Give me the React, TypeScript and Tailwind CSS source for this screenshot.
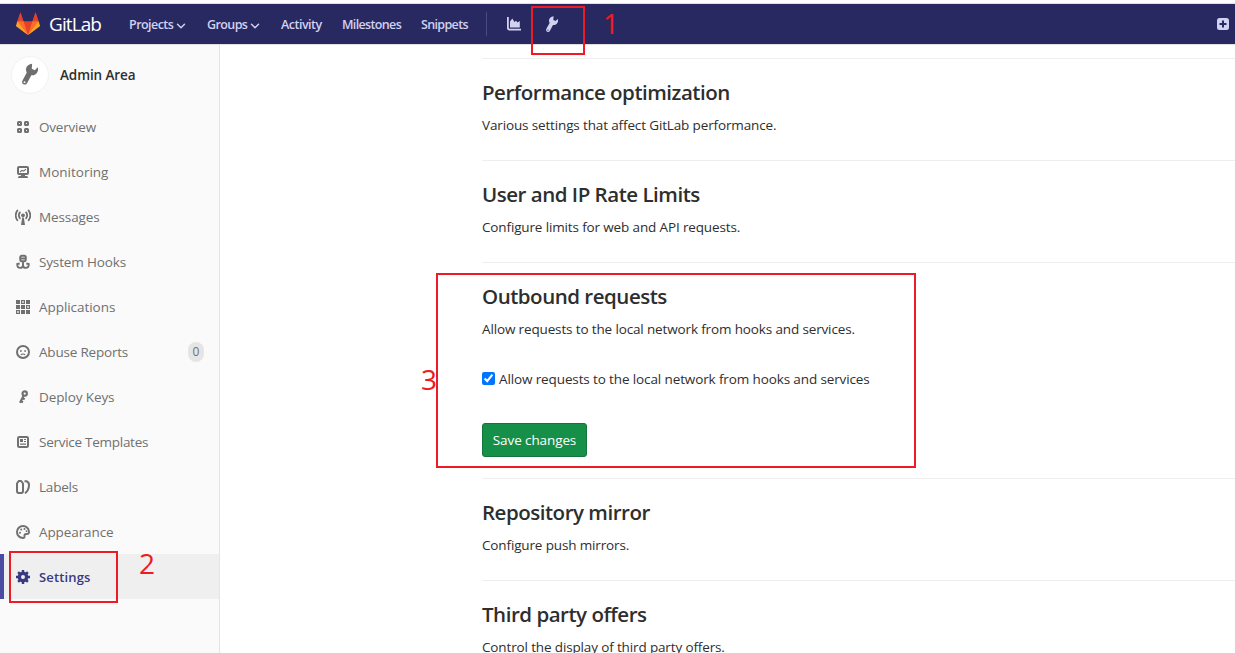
import type { ReactNode } from "react";

const Icon = ({ children }: { children: ReactNode }) => (
  <svg viewBox="0 0 16 16" className="size-4 shrink-0" fill="currentColor">
    {children}
  </svg>
);

const Logo = () => (
  <svg viewBox="0 0 36 36" className="size-6 shrink-0">
    <path fill="#e24329" d="M2 14l9.38 9v-9l-4-12.28c-.205-.632-1.176-.632-1.38 0z" />
    <path fill="#e24329" d="M34 14l-9.38 9v-9l4-12.28c.205-.632 1.176-.632 1.38 0z" />
    <path fill="#e24329" d="M18 34.38L3 14h30z" />
    <path fill="#fc6d26" d="M18 34.38L11.38 14H2l4 11z" />
    <path fill="#fc6d26" d="M18 34.38L24.62 14H34l-4 11z" />
    <path fill="#fca326" d="M2 14L.1 20.16c-.18.565 0 1.2.5 1.56l17.42 12.66z" />
    <path fill="#fca326" d="M34 14l1.9 6.16c.18.565 0 1.2-.5 1.56L18 34.38z" />
  </svg>
);

const Wrench = ({ className }: { className: string }) => (
  <svg viewBox="0 0 12 16" className={className} fill="currentColor">
    <path
      fillRule="evenodd"
      d="M7.6.3C4.8.6 3 2.4 3 4.6c0 .9.2 1.6.6 2.3L.4 12.8c-.6 1.1-.3 2.3.7 2.9 1 .5 2.1.2 2.7-.8L7 9c2.2.2 4.2-1 4.8-3.1.3-1 .3-2 0-2.9L9.6 5.1 7.3 4zM1.9 13.4a.7.7 0 1 1 0 1.4.7.7 0 0 1 0-1.4z"
    />
  </svg>
);

const Chevron = () => (
  <svg viewBox="0 0 10 6" className="mt-0.5 h-1.5 w-2.5" fill="none" stroke="currentColor" strokeWidth="1.5">
    <path d="M1.5 1.3L5 4.7l3.5-3.4" strokeLinecap="round" strokeLinejoin="round" />
  </svg>
);

const items = [
  {
    label: "Overview",
    tracking: "tracking-[-0.2px]",
    icon: (
      <g fill="none" stroke="currentColor" strokeWidth="2">
        <rect x="3" y="3" width="3" height="3" rx=".6" />
        <rect x="10" y="3" width="3" height="3" rx=".6" />
        <rect x="3" y="10" width="3" height="3" rx=".6" />
        <rect x="10" y="10" width="3" height="3" rx=".6" />
      </g>
    ),
  },
  {
    label: "Monitoring",
    tracking: "tracking-[0px]",
    icon: (
      <>
        <rect x="3" y="3" width="10" height="7" rx="1" fill="none" stroke="currentColor" strokeWidth="2" />
        <path d="M6 11h4v1.5H6zM4.5 12h7c.9 0 1.5.8 1.5 2H3c0-1.2.6-2 1.5-2z" />
        <path d="M5 8l2-1.7 1.4.8L11 5.2" fill="none" stroke="currentColor" strokeWidth="1.1" />
      </>
    ),
  },
  {
    label: "Messages",
    tracking: "tracking-[-0.1px]",
    icon: (
      <>
        <circle cx="8" cy="6.3" r="1.9" />
        <path d="M7.2 8.5h1.6L10 16H6z" />
        <path
          d="M2.4 1.5C.3 4.5.3 8.3 2.4 11.3M13.6 1.5c2.1 3 2.1 6.8 0 9.8M4.9 3.4c-1.3 1.8-1.3 4 0 5.8M11.1 3.4c1.3 1.8 1.3 4 0 5.8"
          fill="none"
          stroke="currentColor"
          strokeWidth="1.8"
          strokeLinecap="round"
        />
      </>
    ),
  },
  {
    label: "System Hooks",
    tracking: "tracking-[-0.15px]",
    icon: (
      <g fill="none" stroke="currentColor" strokeWidth="1.9" strokeLinejoin="round">
        <rect x="5.2" y="1.8" width="5.6" height="5.4" rx="1.6" />
        <path d="M5 4.5h6M8 7v7" />
        <path d="M4.7 9.5L2.2 10c0 2.4.9 3.9 2.9 3.9 1.6 0 2.6-.6 2.9-2.2.3 1.6 1.3 2.2 2.9 2.2 2 0 2.9-1.5 2.9-3.9l-2.5-.5" />
      </g>
    ),
  },
  {
    label: "Applications",
    tracking: "tracking-[-0.05px]",
    icon: (
      <>
        <path d="M1 1h4v4H1zM11 1h4v4h-4zM1 6h4v4H1zM6 6h4v4H6zM6 11h4v4H6zM11 11h4v4h-4z" />
        <g fill="none" stroke="currentColor" strokeWidth="1.2">
          <rect x="6.6" y="1.6" width="2.8" height="2.8" />
          <rect x="11.6" y="6.6" width="2.8" height="2.8" />
          <rect x="1.6" y="11.6" width="2.8" height="2.8" />
        </g>
      </>
    ),
  },
  {
    label: "Abuse Reports",
    tracking: "tracking-[-0.2px]",
    count: 0,
    icon: (
      <>
        <circle cx="8" cy="8" r="6" fill="none" stroke="currentColor" strokeWidth="2" />
        <circle cx="5.9" cy="7" r=".9" />
        <circle cx="10.1" cy="7" r=".9" />
        <path d="M5.9 11c.8-1.4 3.4-1.4 4.2 0" fill="none" stroke="currentColor" strokeWidth="1.1" />
      </>
    ),
  },
  {
    label: "Deploy Keys",
    tracking: "tracking-[-0.1px]",
    icon: (
      <g fill="none" stroke="currentColor" strokeWidth="2.1">
        <circle cx="9.7" cy="4.6" r="2.2" />
        <path d="M8.7 6.5L5 13.8M7.5 9.3l2.2 1M5.8 12.3l2.2 1" />
      </g>
    ),
  },
  {
    label: "Service Templates",
    tracking: "tracking-[-0.27px]",
    icon: (
      <>
        <rect x="3" y="3" width="10" height="10" rx="1.3" fill="none" stroke="currentColor" strokeWidth="2" />
        <path d="M5 5h3v3H5zM9 5h2v1H9zM9 7h2v1H9zM5 9.5h6v1.3H5z" />
      </>
    ),
  },
  {
    label: "Labels",
    tracking: "tracking-[-0.2px]",
    icon: (
      <g fill="none" stroke="currentColor" strokeWidth="2" strokeLinejoin="round">
        <path d="M2 4.5L3.7 2h2.5L8 4.5V12c0 1.300-.6 2-1.800 2H3.700C2.600 14 2 13.300 2 12z" />
        <path d="M9.500 2.300h2C13.200 2.900 14 4.300 14 6.100c0 2.900-1.500 7.300-4.200 7.900" />
      </g>
    ),
  },
  {
    label: "Appearance",
    tracking: "tracking-[-0.1px]",
    icon: (
      <>
        <path
          d="M14 8a6 6 0 1 0-6 6c1 0 1.7-.5 1.5-1.5-.3-1.8.5-2.7 2.2-2.6 1.5.1 2.3-.6 2.3-1.9z"
          fill="none"
          stroke="currentColor"
          strokeWidth="2"
        />
        <circle cx="5" cy="8.7" r="1" />
        <circle cx="6.2" cy="5.6" r="1" />
        <circle cx="9.5" cy="5" r="1" />
        <circle cx="11.5" cy="7.2" r=".9" />
      </>
    ),
  },
  {
    label: "Settings",
    tracking: "tracking-[0.15px]",
    active: true,
    icon: (
      <g fill="none" stroke="currentColor">
        <circle cx="8" cy="8" r="3.7" strokeWidth="3.4" />
        <path d="M8 1v3M8 12v3M1 8h3M12 8h3M3.100 3.100l2.100 2.100M10.800 10.800l2.100 2.100M12.900 3.100l-2.100 2.100M5.200 10.800l-2.100 2.100" strokeWidth="2.4" />
      </g>
    ),
  },
];

const Section = ({ title, text, children }: { title: string; text: string; children?: ReactNode }) => (
  <section className="border-t border-[#eee] pt-[18px] pb-[25px]">
    <h4 className="h-[30px] text-[20.5px] leading-[30px] font-semibold tracking-[-0.48px] text-[#2e2e2e]">{title}</h4>
    <p className="mt-2 h-5 text-[13.5px] leading-5 tracking-[-0.14px]">{text}</p>
    {children}
  </section>
);

export default function App() {
  return (
    <div className="relative flex h-[653px] w-[1235px] flex-col overflow-hidden bg-white pt-[3px] font-['Open_Sans',sans-serif] text-[#2e2e2e]">
      <header className="flex h-[42px] shrink-0 items-center border-y border-[#dfdfdf] bg-[#292961] pl-4 text-[12.5px] font-semibold text-[#d1d1f0]">
        <Logo />
        <span className="ml-[9px] w-[80px] text-[19px] font-normal tracking-[-0.9px] text-white">GitLab</span>
        <a className="flex w-[78px] items-center gap-[3px] pt-0.5 tracking-[-0.55px]">
          Projects <Chevron />
        </a>
        <a className="flex w-[74px] items-center gap-[3px] pt-0.5 tracking-[-0.6px]">
          Groups <Chevron />
        </a>
        <a className="w-[61px] pt-0.5 tracking-[-0.5px]">Activity</a>
        <a className="w-[79px] pt-0.5 tracking-[-0.65px]">Milestones</a>
        <a className="w-[65px] pt-0.5 tracking-[-0.65px]">Snippets</a>
        <span className="h-6 w-px bg-[#4c4c80]" />
        <svg viewBox="0 0 14 14" className="ml-5 size-3.5" fill="currentColor">
          <path d="M0 0h1.8v10.5c0 .8.3 1.200 1.100 1.200H14v1.800H2.500C.9 13.500 0 12.600 0 11z" />
          <path d="M3 10.500V4.500L5.300 1.500 7.500 5l1.600-1.200 1.500 1.700L12.800 4v6.500z" />
        </svg>
        <Wrench className="ml-[25px] h-4 w-3" />
        <svg viewBox="0 0 12 12" className="mr-1.5 ml-auto size-3" fill="currentColor">
          <path
            fillRule="evenodd"
            d="M2.5 0h7A2.5 2.5 0 0 1 12 2.5v7A2.5 2.5 0 0 1 9.5 12h-7A2.5 2.5 0 0 1 0 9.5v-7A2.5 2.5 0 0 1 2.5 0zM5 2.500V5H2.500v2H5v2.500h2V7h2.500V5H7V2.500z"
          />
        </svg>
      </header>

      <div className="flex min-h-0 flex-1">
        <aside className="w-[220px] shrink-0 border-r border-[#e5e5e5] bg-[#fafafa]">
          <div className="flex h-[59px] items-center pl-[11px]">
            <div className="flex size-[38px] items-center justify-center rounded-full border border-[#f2f2f2] bg-white text-[#6e6e6e]">
              <Wrench className="mb-0.5 h-[22px] w-4" />
            </div>
            <span className="ml-[11px] pt-0.5 text-[13.5px] font-semibold tracking-[-0.1px]">Admin Area</span>
          </div>
          <nav>
            {items.map((item) => (
              <a
                key={item.label}
                className={
                  item.active
                    ? "flex h-[45px] items-center gap-2 border-l-4 border-[#4b4ba3] bg-[#efefef] pr-[15px] pl-[11px] text-[13px] font-semibold text-[#393982]"
                    : "flex h-[45px] items-center gap-2 pr-[15px] pl-[15px] text-[13.5px] text-[#707070]"
                }
              >
                <Icon>{item.icon}</Icon>
                <span className="pt-0.5">
                  <span className={item.tracking}>{item.label}</span>
                </span>
                {item.count !== undefined && (
                  <span className="ml-auto flex h-5 w-4 items-center justify-center rounded-full bg-[#e5e5e5] pt-px text-xs">
                    {item.count}
                  </span>
                )}
              </a>
            ))}
          </nav>
        </aside>

        <main className="flex-1 pt-[13px] pl-[262px]">
          <Section title="Performance optimization" text="Various settings that affect GitLab performance." />
          <Section title="User and IP Rate Limits" text="Configure limits for web and API requests." />
          <Section title="Outbound requests" text="Allow requests to the local network from hooks and services.">
            <label className="mt-[30px] flex h-5 items-center text-[13.5px] tracking-[-0.12px]">
              <input type="checkbox" defaultChecked className="mr-1 mb-px size-[13px]" />
              Allow requests to the local network from hooks and services
            </label>
            <button className="mt-[34px] mb-[-4px] block h-[34px] w-[105px] rounded-[3px] border border-[#12753a] bg-[#168f48] text-[13.5px] tracking-[-0.1px] text-white">
              Save changes
            </button>
          </Section>
          <Section title="Repository mirror" text="Configure push mirrors." />
          <Section title="Third party offers" text="Control the display of third party offers." />
        </main>
      </div>

      {/* Numbered steps over the page */}
      <div className="absolute top-[6px] left-[531px] h-[49px] w-[54px] border-2 border-[#ed1c24]" />
      <span className="absolute top-[5px] left-[603px] text-[28px] leading-9 text-[#ed1c24]">1</span>
      <div className="absolute top-[551px] left-[9px] h-[52px] w-[109px] border-2 border-[#ed1c24]" />
      <span className="absolute top-[545px] left-[139px] text-[28px] leading-9 text-[#ed1c24]">2</span>
      <div className="absolute top-[273px] left-[436px] h-[195px] w-[480px] border-2 border-[#ed1c24]" />
      <span className="absolute top-[361px] left-[421px] text-[28px] leading-9 text-[#ed1c24]">3</span>
    </div>
  );
}
